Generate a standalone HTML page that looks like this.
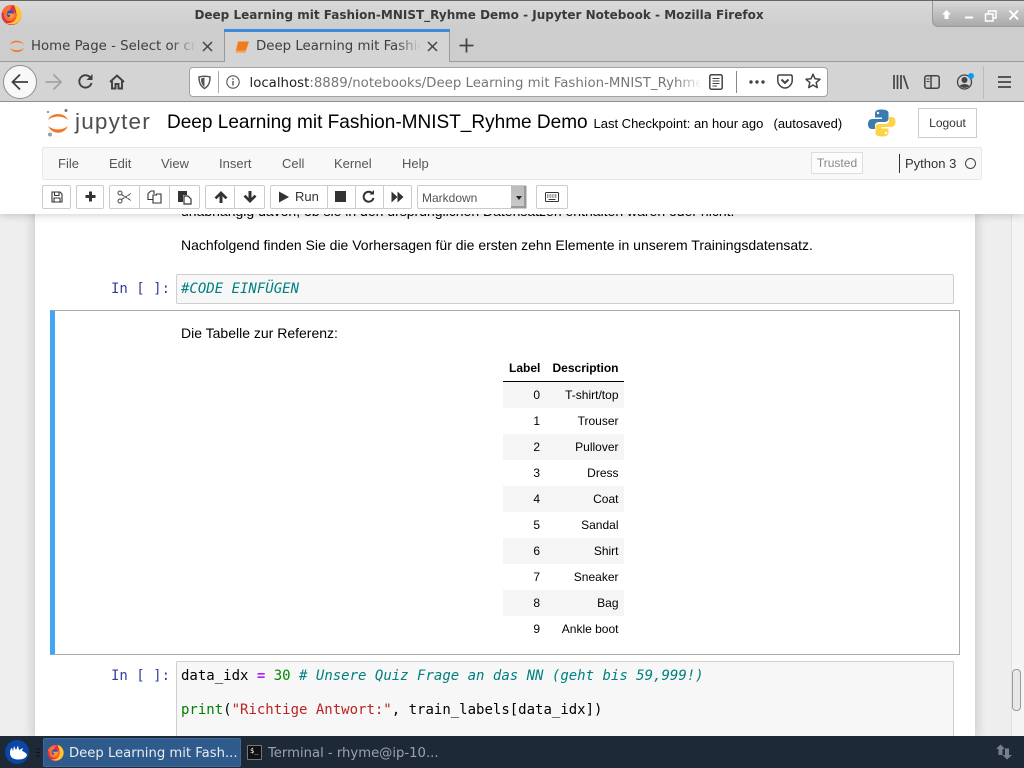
<!DOCTYPE html>
<html><head><meta charset="utf-8"><style>
html,body{margin:0;padding:0;width:1024px;height:768px;overflow:hidden;background:#eee;}
*{box-sizing:border-box;}
.a{position:absolute;white-space:nowrap;}
.d{font-family:"DejaVu Sans",sans-serif;}
.l{font-family:"Liberation Sans",sans-serif;}
.m{font-family:"DejaVu Sans Mono",monospace;font-size:14px;line-height:17px;}
svg{position:absolute;overflow:visible;}
.btn{position:absolute;top:185px;height:24px;background:#fff;border:1px solid #ccc;border-radius:2px;}
.menu{position:absolute;top:156px;font:13px/15px "Liberation Sans",sans-serif;color:#555;}
.r{position:absolute;left:503px;width:121px;height:26px;font:12px/26px "Liberation Sans",sans-serif;color:#000;}
.r b{font-weight:normal;position:absolute;}
.r .n{right:84px;}
.r .t{right:5.500px;}
</style></head><body>
<div class="a" style="left:0;top:0;width:1024px;height:768px;background:#eee"></div>
<!-- notebook page -->
<div class="a" style="left:35px;top:200px;width:940px;height:540px;background:#fff;box-shadow:0 0 12px rgba(0,0,0,.2)"></div>
<div class="a" style="left:1011px;top:100px;width:13px;height:640px;background:#f4f4f4;border-left:1px solid #e2e2e2"></div>
<div class="a" style="left:1012px;top:669px;width:9px;height:42px;background:#e8e8e8;border:1px solid #9a9a9a;border-radius:4px"></div>

<div class="a l" style="left:181px;top:203px;font-size:14px;line-height:16px;color:#000">unabhängig davon, ob sie in den ursprünglichen Datensätzen enthalten waren oder nicht.</div>
<div class="a l" style="left:181px;top:237px;font-size:14px;line-height:16px;color:#000">Nachfolgend finden Sie die Vorhersagen für die ersten zehn Elemente in unserem Trainingsdatensatz.</div>

<div class="a m" style="left:111px;top:281px;color:#303f9f">In [ ]:</div>
<div class="a" style="left:176px;top:274px;width:778px;height:30px;background:#f7f7f7;border:1px solid #cfcfcf;border-radius:2px"></div>
<div class="a m" style="left:181px;top:281px;color:#008080;font-style:italic">#CODE EINFÜGEN</div>

<div class="a" style="left:50px;top:310px;width:910px;height:345px;background:#fff;border:1px solid #ababab;border-left:5px solid #42a5f5"></div>
<div class="a l" style="left:181px;top:325px;font-size:14px;line-height:16px;color:#000">Die Tabelle zur Referenz:</div>

<div class="a l" style="left:509px;top:361px;font-size:12px;line-height:14px;font-weight:bold;color:#000">Label</div>
<div class="a l" style="left:552.500px;top:361px;font-size:12px;line-height:14px;font-weight:bold;color:#000">Description</div>
<div class="a" style="left:503px;top:381px;width:121px;height:1px;background:#000"></div>
<div class="r" style="top:382px;background:#f5f5f5"><b class="n">0</b><b class="t">T-shirt/top</b></div>
<div class="r" style="top:408px"><b class="n">1</b><b class="t">Trouser</b></div>
<div class="r" style="top:434px;background:#f5f5f5"><b class="n">2</b><b class="t">Pullover</b></div>
<div class="r" style="top:460px"><b class="n">3</b><b class="t">Dress</b></div>
<div class="r" style="top:486px;background:#f5f5f5"><b class="n">4</b><b class="t">Coat</b></div>
<div class="r" style="top:512px"><b class="n">5</b><b class="t">Sandal</b></div>
<div class="r" style="top:538px;background:#f5f5f5"><b class="n">6</b><b class="t">Shirt</b></div>
<div class="r" style="top:564px"><b class="n">7</b><b class="t">Sneaker</b></div>
<div class="r" style="top:590px;background:#f5f5f5"><b class="n">8</b><b class="t">Bag</b></div>
<div class="r" style="top:616px"><b class="n">9</b><b class="t">Ankle boot</b></div>

<div class="a m" style="left:111px;top:668px;color:#303f9f">In [ ]:</div>
<div class="a" style="left:176px;top:661px;width:778px;height:90px;background:#f7f7f7;border:1px solid #cfcfcf;border-radius:2px"></div>
<div class="a m" style="left:181px;top:668px;color:#000">data_idx <span style="color:#a2f;font-weight:bold">=</span> <span style="color:#080">30</span> <span style="color:#008080;font-style:italic"># Unsere Quiz Frage an das NN (geht bis 59,999!)</span></div>
<div class="a m" style="left:181px;top:702px;color:#000"><span style="color:#008000">print</span>(<span style="color:#b22">"Richtige Antwort:"</span>, train_labels[data_idx])</div>

<!-- jupyter header -->
<div class="a" style="left:0;top:102px;width:1024px;height:112px;background:#fff;box-shadow:0 1px 8px rgba(0,0,0,.2)"></div>
<svg style="left:45px;top:108px" width="30" height="30" viewBox="0 0 30 30">
<path d="M3 12 C6 4 20 4 23 12 C18 7.500 8 7.500 3 12Z" fill="#f37726"/>
<path d="M3 18 C7 27 19 27 23 18 C18 22.500 8 22.500 3 18Z" fill="#f37726"/>
<circle cx="21" cy="2.500" r="1.500" fill="#767677"/><circle cx="3" cy="4" r="1" fill="#767677"/><circle cx="5" cy="26.500" r="2" fill="#9e9e9e"/>
</svg>
<div class="a l" style="left:75px;top:107px;font-size:22.500px;line-height:30px;color:#4e4e4e;letter-spacing:1.200px">jupyter</div>
<div class="a l" style="left:167px;top:110px;font-size:19.030px;line-height:25px;color:#000">Deep Learning mit Fashion-MNIST_Ryhme Demo</div>
<div class="a l" style="left:593.500px;top:116px;font-size:13px;line-height:16px;color:#000">Last Checkpoint: an hour ago</div>
<div class="a l" style="left:773.500px;top:116px;font-size:13px;line-height:16px;color:#000">(autosaved)</div>
<svg style="left:868px;top:109px" width="28" height="28" viewBox="0 0 28 28">
<path d="M13.500 0.500 C7 0.500 7 3 7 6 V8.500 H14 V10 H4.500 C1.500 10 0 12 0 15 C0 18.500 1.500 20 4 20 H7 V16.500 C7 14 9 13 11 13 H17 C19 13 20.500 11.500 20.500 9.500 V4 C20.500 2 18.500 0.500 13.500 0.500Z" fill="#3b7bb0"/>
<path d="M14 27.500 C20.500 27.500 20.500 25 20.500 22 V19.500 H13.500 V18 H23 C26 18 27.500 16 27.500 13 C27.500 9.500 26 8 23.500 8 H21 V11.500 C21 14 19 15 17 15 H10.500 C8.500 15 7.500 16.500 7.500 18.500 V24 C7.500 26 9.500 27.500 14 27.500Z" fill="#fdd445"/>
<circle cx="10" cy="4" r="1.200" fill="#fff"/><circle cx="18" cy="24" r="1.200" fill="#fff"/>
</svg>
<div class="a l" style="left:918px;top:108px;width:59px;height:30px;border:1px solid #ccc;font-size:12px;line-height:28px;text-align:center;color:#333">Logout</div>

<!-- menu -->
<div class="a" style="left:42px;top:147px;width:940px;height:33px;background:#f8f8f8;border:1px solid #e7e7e7;border-radius:2px"></div>
<div class="menu" style="left:58px">File</div><div class="menu" style="left:109px">Edit</div><div class="menu" style="left:161px">View</div><div class="menu" style="left:219px">Insert</div><div class="menu" style="left:282px">Cell</div><div class="menu" style="left:334px">Kernel</div><div class="menu" style="left:402px">Help</div>
<div class="a l" style="left:811px;top:152px;width:52px;height:22px;border:1px solid #ddd;background:#fcfcfc;font-size:12px;line-height:20px;text-align:center;color:#888">Trusted</div>
<div class="a" style="left:899px;top:154px;width:1px;height:19px;background:#333"></div>
<div class="a l" style="left:905px;top:156px;font-size:13px;line-height:15px;color:#333">Python 3</div>
<div class="a" style="left:965px;top:158px;width:11px;height:11px;border:1.500px solid #444;border-radius:50%"></div>

<!-- toolbar -->
<div class="btn" style="left:42px;width:29px"></div>
<svg style="left:51px;top:191px" width="12" height="12" viewBox="0 0 12 12"><path d="M1 1H9L11 3V11H1Z M3.500 1V4.500H8V1 M3 11V7H9V11" fill="none" stroke="#333" stroke-width="1.100"/></svg>
<div class="btn" style="left:76px;width:28px"></div>
<svg style="left:85px;top:191px" width="11" height="11" viewBox="0 0 11 11"><path d="M5.500 0.500V10.500M0.500 5.500H10.500" stroke="#333" stroke-width="3"/></svg>
<div class="btn" style="left:109px;width:91px"></div>
<div class="a" style="left:139px;top:185px;width:1px;height:24px;background:#ccc"></div>
<div class="a" style="left:169px;top:185px;width:1px;height:24px;background:#ccc"></div>
<svg style="left:117px;top:190px" width="15" height="14" viewBox="0 0 15 14"><circle cx="3" cy="3" r="2" fill="none" stroke="#444" stroke-width="1"/><circle cx="3" cy="11" r="2" fill="none" stroke="#444" stroke-width="1"/><path d="M4.500 4.500L14 10.500M4.500 9.500L14 3.500" stroke="#555" stroke-width="1.100" stroke-dasharray="3 .5"/></svg>
<svg style="left:147px;top:190px" width="15" height="14" viewBox="0 0 15 14"><path d="M1 3.500L4 1H7V4M1 3.500V9.500H6M6 5H9.500V4H14V13H6Z" fill="none" stroke="#333" stroke-width="1.100"/></svg>
<svg style="left:177px;top:190px" width="15" height="15" viewBox="0 0 15 15"><path d="M1 1H10V5H6V12H1Z" fill="#333"/><path d="M7 6H11L14 9V14H7Z" fill="#fff" stroke="#333" stroke-width="1.200"/></svg>
<div class="btn" style="left:205px;width:60px"></div>
<div class="a" style="left:234px;top:185px;width:1px;height:24px;background:#ccc"></div>
<svg style="left:214px;top:191px" width="14" height="12" viewBox="0 0 14 12"><path d="M7 0L13.500 6.500L11.500 8.200L8.500 5.300V12H5.500V5.300L2.500 8.200L0.500 6.500Z" fill="#333"/></svg>
<svg style="left:243px;top:191px" width="14" height="12" viewBox="0 0 14 12"><path d="M7 12L13.500 5.500L11.500 3.800L8.500 6.700V0H5.500V6.700L2.500 3.800L0.500 5.500Z" fill="#333"/></svg>
<div class="btn" style="left:270px;width:142px"></div>
<div class="a" style="left:327px;top:185px;width:1px;height:24px;background:#ccc"></div>
<div class="a" style="left:355px;top:185px;width:1px;height:24px;background:#ccc"></div>
<div class="a" style="left:383px;top:185px;width:1px;height:24px;background:#ccc"></div>
<svg style="left:278px;top:191px" width="12" height="12" viewBox="0 0 12 12"><path d="M1 0.500L11 6L1 11.500Z" fill="#333"/></svg>
<div class="a l" style="left:295px;top:189px;font-size:13px;line-height:15px;color:#333">Run</div>
<div class="a" style="left:335px;top:191px;width:11px;height:11px;background:#333"></div>
<svg style="left:362px;top:190px" width="13" height="13" viewBox="0 0 13 13"><path d="M10.500 3.500A5 5 0 1 0 11.500 8" fill="none" stroke="#333" stroke-width="2"/><path d="M7.500 4.500H12V0Z" fill="#333"/></svg>
<svg style="left:391px;top:191px" width="13" height="12" viewBox="0 0 13 12"><path d="M0.500 0.500L6.500 6L0.500 11.500ZM6.500 0.500L12.500 6L6.500 11.500Z" fill="#333"/></svg>
<div class="a" style="left:417px;top:185px;width:110px;height:24px;background:#fff;border:1px solid #ccc;border-radius:2px"></div>
<div class="a l" style="left:422px;top:190px;font-size:12px;line-height:16px;color:#555">Markdown</div>
<div class="a" style="left:511px;top:186px;width:15px;height:22px;background:linear-gradient(#bbb,#c9c9c9);border-right:2px solid #999;border-bottom:2px solid #999"></div>
<div class="a" style="left:516px;top:196px;border-left:3.500px solid transparent;border-right:3.500px solid transparent;border-top:4px solid #222"></div>
<div class="btn" style="left:536px;width:32px"></div>
<svg style="left:545px;top:192px" width="14" height="10" viewBox="0 0 14 10"><rect x="0.500" y="0.500" width="13" height="9" rx="1" fill="none" stroke="#333"/><path d="M2 3H12M2 5H12" stroke="#333" stroke-dasharray="1 .6"/><path d="M3.500 7.500H10.500" stroke="#333"/></svg>

<!-- firefox title -->
<div class="a" style="left:0;top:0;width:1024px;height:28px;background:linear-gradient(#d9d9d9,#cdcdcd);border-top:1px solid #666"></div>
<div class="a" style="left:0;top:28px;width:1024px;height:33px;background:#cdcdcd"></div>
<div class="a d" style="left:0;top:8px;width:958px;text-align:center;font-size:12px;line-height:15px;font-weight:bold;color:#3a3a3a">Deep Learning mit Fashion-MNIST_Ryhme Demo - Jupyter Notebook - Mozilla Firefox</div>
<div class="a" style="left:932px;top:1px;width:92px;height:26px;background:linear-gradient(#d8d8d8,#a9a9a9);border-left:1px solid #999;border-bottom:1px solid #999;border-bottom-left-radius:6px"></div>
<svg style="left:940px;top:9px" width="80" height="12" viewBox="0 0 80 12">
<path d="M6.500 1L11 5.500H8.500V10H4.500V5.500H2Z" fill="#fff"/>
<path d="M25 8.500H33" stroke="#fff" stroke-width="2"/>
<path d="M45.500 5H53V12H45.500Z M48.500 5V2H56V9H53" fill="none" stroke="#fff" stroke-width="1.500"/>
<path d="M69.500 1.500L78 10.500M78 1.500L69.500 10.500" stroke="#fff" stroke-width="2"/>
</svg>
<svg style="left:1px;top:4px" width="21" height="22" viewBox="0 0 21 22">
<circle cx="10.500" cy="11" r="10" fill="#d9304f"/>
<path d="M13 0.800C19 2.500 22 9 20 14C18 20 11 22 5 19C11 19.500 15 17 15.500 12C15.800 8 14 4 13 0.800Z" fill="#ffc42e"/>
<path d="M1 8C3 3 8 0.800 12 1.500C9.500 3 9 5 9.500 6.500C13 6.500 15.500 9 15 12.500C14.500 16.500 9 18.500 5.500 16C3.500 14.500 2.500 11.500 3 9.500Z" fill="#f9722d"/>
<circle cx="9.500" cy="10" r="3.800" fill="#3f4bbd"/>
<path d="M6 9.500H13.500C13.500 13 10 15.500 7 13.800C8.500 13.500 9.500 12 9 11C8 11 6.800 10.500 6 9.500Z" fill="#ff9a2e"/>
</svg>

<!-- tabs -->
<div class="a" style="left:0;top:61px;width:1024px;height:1px;background:#9a9a9a"></div>
<svg style="left:9px;top:38px" width="16" height="16" viewBox="0 0 16 16"><path d="M1 6.500C3 1.500 12 1.500 15 6.500C11 3.500 5 3.500 1 6.500Z" fill="#f37726"/><path d="M1 10C4 15.500 12 15.500 15 10C11 13 5 13 1 10Z" fill="#f37726"/></svg>
<div class="a d" style="left:31px;top:38px;width:165px;overflow:hidden;font-size:13.330px;line-height:18px;color:#3f3f3f;-webkit-mask-image:linear-gradient(90deg,#000 85%,transparent);mask-image:linear-gradient(90deg,#000 85%,transparent)">Home Page - Select or create a</div>
<svg style="left:201.500px;top:41px" width="11" height="11" viewBox="0 0 11 11"><path d="M1 1L10 10M10 1L1 10" stroke="#444" stroke-width="1.500"/></svg>
<div class="a" style="left:224px;top:29px;width:226px;height:33px;background:#d4d4d4;border:1px solid #9a9a9a;border-top:none;border-bottom:none"></div>
<div class="a" style="left:224px;top:29px;width:226px;height:3px;background:#3d8be0"></div>
<svg style="left:235px;top:41px" width="14" height="12" viewBox="0 0 14 12"><path d="M3 0.500H14L11 9.500H1Z" fill="#ef7d1e"/><path d="M1 9.500C0 11.500 1 11.800 2 11.800H10.500L11 9.500" fill="#f5a25c"/></svg>
<div class="a d" style="left:256px;top:38px;width:165px;overflow:hidden;font-size:13.330px;line-height:18px;color:#3f3f3f;-webkit-mask-image:linear-gradient(90deg,#000 85%,transparent);mask-image:linear-gradient(90deg,#000 85%,transparent)">Deep Learning mit Fashion</div>
<svg style="left:427px;top:41px" width="11" height="11" viewBox="0 0 11 11"><path d="M1 1L10 10M10 1L1 10" stroke="#444" stroke-width="1.500"/></svg>
<svg style="left:458.500px;top:38px" width="15" height="15" viewBox="0 0 15 15"><path d="M7.500 0.500V14.500M0.500 7.500H14.500" stroke="#444" stroke-width="1.800"/></svg>

<!-- nav -->
<div class="a" style="left:0;top:62px;width:1024px;height:40px;background:#d4d4d4;border-bottom:1px solid #8e8e8e"></div>
<div class="a" style="left:3px;top:65px;width:34px;height:34px;border-radius:50%;background:#f8f8f8;border:1px solid #8f8f8f"></div>
<svg style="left:11px;top:73px" width="18" height="18" viewBox="0 0 18 18"><path d="M1.500 9H17M9 1.500L1.500 9L9 16.500" fill="none" stroke="#3f3f3f" stroke-width="1.800"/></svg>
<svg style="left:45px;top:73px" width="17" height="18" viewBox="0 0 17 18"><path d="M16 9H0.500M8.500 1.500L16 9L8.500 16.500" fill="none" stroke="#a3a3a3" stroke-width="1.800"/></svg>
<svg style="left:78px;top:74px" width="15" height="15" viewBox="0 0 15 15"><path d="M13 4.500A6.200 6.200 0 1 0 13.500 9" fill="none" stroke="#3f3f3f" stroke-width="1.900"/><path d="M8.500 6H14.500V0Z" fill="#3f3f3f"/></svg>
<svg style="left:109px;top:74px" width="16" height="16" viewBox="0 0 16 16"><path d="M1 8L8 1.500L15 8M3 7V14.500H6.500V10H9.500V14.500H13V7" fill="none" stroke="#3f3f3f" stroke-width="1.900"/></svg>
<div class="a" style="left:189px;top:67px;width:639px;height:30px;background:#fff;border:1px solid #a3a3a3;border-radius:4px"></div>
<svg style="left:198px;top:75px" width="13" height="14" viewBox="0 0 13 14"><path d="M1 2C4 1 9 1 12 2C12 7 11 11 6.500 13.500C2 11 1 7 1 2Z" fill="none" stroke="#555" stroke-width="1.500"/><path d="M6.500 2.500V12C3.500 10 3 7 3 3.500Z" fill="#555"/></svg>
<div class="a" style="left:218px;top:71px;width:1px;height:22px;background:#aaa"></div>
<svg style="left:226px;top:75px" width="14" height="14" viewBox="0 0 14 14"><circle cx="7" cy="7" r="6.200" fill="none" stroke="#555" stroke-width="1.100"/><path d="M7 6V10.500M7 3.300V4.800" stroke="#555" stroke-width="1.400"/></svg>
<div class="a d" style="left:249.500px;top:75px;width:452px;overflow:hidden;font-size:13.330px;line-height:18px;color:#777;-webkit-mask-image:linear-gradient(90deg,#000 94%,transparent);mask-image:linear-gradient(90deg,#000 94%,transparent)"><span style="color:#222">localhost</span>:8889/notebooks/Deep Learning mit Fashion-MNIST_Ryhme Demo</div>
<svg style="left:709px;top:74px" width="14" height="16" viewBox="0 0 14 16"><rect x="0.800" y="0.800" width="12.400" height="14.400" rx="1.500" fill="none" stroke="#444" stroke-width="1.500"/><path d="M3.500 4.500H10.500M3.500 7H10.500M3.500 9.500H10.500M3.500 12H8" stroke="#444"/></svg>
<div class="a" style="left:736px;top:71px;width:1px;height:22px;background:#888"></div>
<svg style="left:749px;top:80px" width="16" height="4" viewBox="0 0 16 4"><circle cx="2" cy="2" r="1.700" fill="#444"/><circle cx="8" cy="2" r="1.700" fill="#444"/><circle cx="14" cy="2" r="1.700" fill="#444"/></svg>
<svg style="left:777px;top:74px" width="16" height="15" viewBox="0 0 16 15"><path d="M2 1H14C15 1 15.200 2 15.200 3V6.500C15.200 10.500 11.500 14 8 14C4.500 14 0.800 10.500 0.800 6.500V3C0.800 2 1 1 2 1Z" fill="none" stroke="#444" stroke-width="1.500"/><path d="M4.500 5.500L8 9L11.500 5.500" fill="none" stroke="#444" stroke-width="2"/></svg>
<svg style="left:805px;top:73px" width="16" height="16" viewBox="0 0 16 16"><path d="M8 1.200L10 5.800L15 6.300L11.200 9.600L12.300 14.600L8 12L3.700 14.600L4.800 9.600L1 6.300L6 5.800Z" fill="none" stroke="#444" stroke-width="1.500" stroke-linejoin="round"/></svg>
<svg style="left:893px;top:75px" width="16" height="14" viewBox="0 0 16 14"><path d="M1 0V14M4.500 0V14M8 0V14M10.500 0.500L15 14" stroke="#444" stroke-width="1.700"/></svg>
<svg style="left:924px;top:75px" width="16" height="14" viewBox="0 0 16 14"><rect x="0.800" y="0.800" width="14.400" height="12.400" rx="2" fill="none" stroke="#444" stroke-width="1.500"/><path d="M7 1V13" stroke="#444" stroke-width="1.500"/><path d="M2.500 4H5.500M2.500 6.500H5.500" stroke="#444"/></svg>
<svg style="left:957px;top:73px" width="18" height="17" viewBox="0 0 18 17"><circle cx="7.500" cy="9" r="7" fill="none" stroke="#444" stroke-width="1.300"/><circle cx="7.500" cy="7" r="3" fill="#444"/><path d="M2.800 13C4 10.500 11 10.500 12.200 13C10 15.500 5 15.500 2.800 13Z" fill="#444"/><circle cx="14" cy="3" r="3" fill="#0a9bf5"/></svg>
<div class="a" style="left:983px;top:66px;width:1px;height:33px;background:#bbb"></div>
<svg style="left:998px;top:76px" width="13" height="12" viewBox="0 0 13 12"><path d="M0 1H13M0 6H13M0 11H13" stroke="#444" stroke-width="1.700"/></svg>

<!-- taskbar -->
<div class="a" style="left:0;top:736px;width:1024px;height:32px;background:#1d2937"></div>
<div class="a" style="left:5px;top:740px;width:24px;height:24px;border-radius:50%;background:#0a46a5"></div>
<svg style="left:9px;top:745px" width="18" height="15" viewBox="0 0 18 15"><path d="M1 8C1 5 2 3 3 3L4 6L5 1L7 5L9 0.500L10 5L14 3L13 6C16 7 18 9 18 10C17 13 14 14.500 9 14.500C4 14.500 1 12 1 8Z" fill="#fff"/></svg>
<svg style="left:36px;top:748px" width="4" height="9" viewBox="0 0 4 9"><path d="M0 1H4M0 4.500H4M0 8H4" stroke="#0d131b" stroke-width="1"/></svg>
<div class="a" style="left:43px;top:738px;width:198px;height:29px;background:#2f5a8c;border:1px solid #3c6a9e;border-radius:2px"></div>
<svg style="left:47px;top:744px" width="17" height="18" viewBox="0 0 21 22">
<circle cx="10.500" cy="11" r="10" fill="#d9304f"/>
<path d="M13 0.800C19 2.500 22 9 20 14C18 20 11 22 5 19C11 19.500 15 17 15.500 12C15.800 8 14 4 13 0.800Z" fill="#ffc42e"/>
<path d="M1 8C3 3 8 0.800 12 1.500C9.500 3 9 5 9.500 6.500C13 6.500 15.500 9 15 12.500C14.500 16.500 9 18.500 5.500 16C3.500 14.500 2.500 11.500 3 9.500Z" fill="#f9722d"/>
<circle cx="9.500" cy="10" r="3.800" fill="#3f4bbd"/>
<path d="M6 9.500H13.500C13.500 13 10 15.500 7 13.800C8.500 13.500 9.500 12 9 11C8 11 6.800 10.500 6 9.500Z" fill="#ff9a2e"/>
</svg>
<div class="a d" style="left:69px;top:745px;font-size:13.200px;line-height:18px;color:#e8ecf0">Deep Learning mit Fash...</div>
<div class="a" style="left:247px;top:745px;width:15px;height:15px;background:#111;border:1px solid #777;border-radius:1px"></div>
<div class="a" style="left:250px;top:747px;font:7px/8px 'DejaVu Sans Mono',monospace;color:#fff">$_</div>
<div class="a d" style="left:268px;top:745px;font-size:13.200px;line-height:18px;color:#9aa3ad">Terminal - rhyme@ip-10...</div>
<svg style="left:995px;top:744px" width="18" height="16" viewBox="0 0 18 16"><path d="M5.500 0.500L10 5H7.500V11H3.500V5H1Z" fill="#76808c"/><path d="M12 15.500L7.500 11H10V4.500H14V11H17Z" fill="#76808c"/></svg>
</body></html>
